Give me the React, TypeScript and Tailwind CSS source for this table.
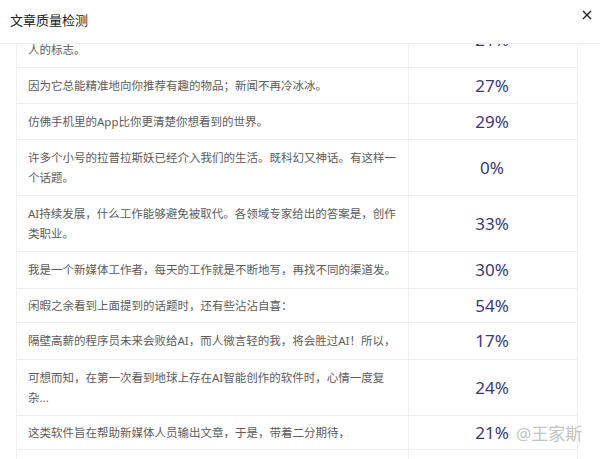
import React from "react";

const rows: { lines: string[]; pct: string; h: number }[] = [
  { lines: ["\u00a0", "人的标志。"], pct: "21%", h: 56 },
  { lines: ["因为它总能精准地向你推荐有趣的物品；新闻不再冷冰冰。"], pct: "27%", h: 36 },
  { lines: ["仿佛手机里的App比你更清楚你想看到的世界。"], pct: "29%", h: 36 },
  { lines: ["许多个小号的拉普拉斯妖已经介入我们的生活。既科幻又神话。有这样一", "个话题。"], pct: "0%", h: 56 },
  { lines: ["AI持续发展，什么工作能够避免被取代。各领域专家给出的答案是，创作", "类职业。"], pct: "33%", h: 56 },
  { lines: ["我是一个新媒体工作者，每天的工作就是不断地写，再找不同的渠道发。"], pct: "30%", h: 37 },
  { lines: ["闲暇之余看到上面提到的话题时，还有些沾沾自喜："], pct: "54%", h: 34 },
  { lines: ["隔壁高薪的程序员未来会败给AI，而人微言轻的我，将会胜过AI！所以，"], pct: "17%", h: 37 },
  { lines: ["可想而知，在第一次看到地球上存在AI智能创作的软件时，心情一度复", "杂..."], pct: "24%", h: 56 },
  { lines: ["这类软件旨在帮助新媒体人员输出文章，于是，带着二分期待，"], pct: "21%", h: 34 },
  { lines: [""], pct: "", h: 36 },
];

export default function App() {
  return (
    <div
      className="relative w-[600px] h-[459px] overflow-hidden bg-white"
      style={{ fontFamily: '"Noto Sans", "Noto Sans CJK SC", sans-serif' }}
    >
      <div className="h-[44px] flex items-start justify-between border-b border-[#efefef] pl-[10px] pr-[8px]">
        <div className="mt-[10px] text-[13px] leading-[20px] text-[#222]">文章质量检测</div>
        <svg className="mt-[10px]" width="10" height="10" viewBox="0 0 10 10">
          <path d="M1 1 L9 9 M9 1 L1 9" stroke="#222" strokeWidth="1.4" />
        </svg>
      </div>
      <div className="h-[415px] overflow-hidden">
        <div className="ml-[16px] w-[562px] mt-[-32px] border-l border-r border-[#f0f0f0]">
          {rows.map((r, i) => (
            <div
              key={i}
              className="flex border-b border-[#ededed]"
              style={{ height: r.h }}
            >
              <div className="w-[392px] shrink-0 border-r border-[#f0f0f0] flex flex-col justify-center pl-[11px] text-[11.5px] leading-[20px] text-[#5c5c5c] whitespace-nowrap">
                {r.lines.map((l, j) => (
                  <div key={j}>{l}</div>
                ))}
              </div>
              <div className="flex-1 flex items-center justify-center pr-[2px] text-[17px] text-[#3b3775]">
                {r.pct}
              </div>
            </div>
          ))}
        </div>
      </div>
      <div className="absolute left-[516px] top-[423px] text-[17px] leading-[22px] text-[#c4c4c4]">
        @王家斯
      </div>
    </div>
  );
}
